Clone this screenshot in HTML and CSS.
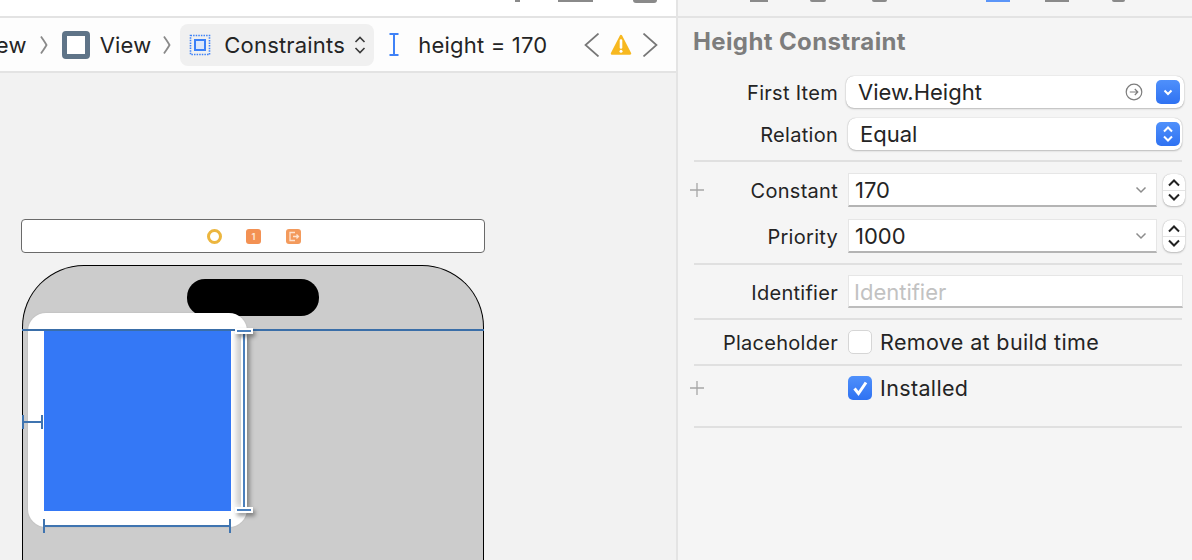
FILE: index.html
```html
<!DOCTYPE html>
<html lang="en">
<head>
<meta charset="utf-8">
<title>Height Constraint</title>
<link rel="stylesheet" href="styles.css">
</head>
<body>
<div class="app">
  <main class="editor">
    <div class="tabstrip">
      <span class="stub stub-a"></span>
      <span class="stub stub-b"></span>
      <span class="stub stub-c"></span>
    </div>
    <nav class="jumpbar">
      <span class="crumb crumb-clip">View</span>
      <svg class="sep" width="10" height="20" viewBox="0 0 10 20"><path d="M2 1.500 C5 6 6.500 8 7.500 10 C6.500 12 5 14 2 18.500" fill="none" stroke="#8a8a8a" stroke-width="1.800"/></svg>
      <span class="view-icon"></span>
      <span class="crumb">View</span>
      <svg class="sep sep-2" width="10" height="20" viewBox="0 0 10 20"><path d="M2 1.500 C5 6 6.500 8 7.500 10 C6.500 12 5 14 2 18.500" fill="none" stroke="#8a8a8a" stroke-width="1.800"/></svg>
      <div class="crumb-pill">
        <svg width="22" height="22" viewBox="0 0 22 22"><rect x="1.500" y="1.500" width="19" height="19" fill="none" stroke="#3f82f7" stroke-width="1.600" stroke-dasharray="1.500 1.100"/><rect x="6" y="6" width="10" height="10" fill="#dbe7fb" stroke="#3a80f7" stroke-width="2"/></svg>
        <span class="crumb">Constraints</span>
        <svg width="14" height="22" viewBox="0 0 14 22"><path d="M2.500 8 L7 3.500 L11.500 8 M2.500 14 L7 18.500 L11.500 14" fill="none" stroke="#3a3a3a" stroke-width="1.600"/></svg>
      </div>
      <svg class="i-beam" width="12" height="24" viewBox="0 0 12 24"><path d="M1.500 1 H10.500 M1.500 22 H10.500 M6 1 V22" fill="none" stroke="#3f82f7" stroke-width="2"/></svg>
      <span class="crumb crumb-last">height = 170</span>
      <svg class="nav-back" width="16" height="24" viewBox="0 0 16 24"><path d="M14.500 0.500 L1.500 12 L14.500 23.500" fill="none" stroke="#777" stroke-width="1.700"/></svg>
      <svg class="warn" width="24" height="22" viewBox="0 0 24 22"><path d="M12 2 L21 19.500 H3 Z" fill="#f7b820" stroke="#f7b820" stroke-width="2.500" stroke-linejoin="round"/><path d="M12 6.500 V13.500" stroke="#fff" stroke-width="2.600" stroke-linecap="round"/><circle cx="12" cy="17.300" r="1.500" fill="#fff"/></svg>
      <svg class="nav-next" width="16" height="24" viewBox="0 0 16 24"><path d="M1.500 0.500 L14.500 12 L1.500 23.500" fill="none" stroke="#777" stroke-width="1.700"/></svg>
    </nav>
    <div class="canvas">
      <div class="scene-bar">
        <span class="dock-vc"></span>
        <span class="dock-fr">1</span>
        <svg class="dock-ex" width="15" height="15" viewBox="0 0 15 15"><rect width="15" height="15" rx="3" fill="#f39a5c"/><path d="M9 3.500 H4 V11.500 H9 M7 7.500 H12.500 M10.500 5.500 L12.500 7.500 L10.500 9.500" fill="none" stroke="#fde3d0" stroke-width="1.300"/></svg>
      </div>
      <div class="device">
        <div class="notch"></div>
        <div class="host-view">
          <div class="blue-view"></div>
          <div class="height-handle">
            <span class="handle-cap handle-top"></span>
            <span class="handle-line"></span>
            <span class="handle-cap handle-bottom"></span>
          </div>
        </div>
      </div>
      <div class="guide-top"></div>
      <div class="guide-left"></div>
      <div class="guide-bottom"></div>
    </div>
  </main>
  <aside class="inspector">
    <div class="tabstrip tabstrip-i">
      <span class="stub stub-d"></span>
      <span class="stub stub-e"></span>
      <span class="stub stub-f"></span>
      <span class="stub stub-active"></span>
      <span class="stub stub-g"></span>
      <span class="stub stub-h"></span>
    </div>
    <h2 class="title">Height Constraint</h2>
    <div class="form">
      <div class="row row-first">
        <label class="lbl">First Item</label>
        <div class="pop pop-first">
          <span class="val">View.Height</span>
          <svg class="goto" width="18" height="18" viewBox="0 0 18 18"><circle cx="9" cy="9" r="7.800" fill="none" stroke="#7d7d7d" stroke-width="1.200"/><path d="M4.800 9 H12.800 M9.800 6 L12.800 9 L9.800 12" fill="none" stroke="#7d7d7d" stroke-width="1.200"/></svg>
          <span class="blue-btn"><svg width="12" height="12" viewBox="0 0 12 12"><path d="M2.500 4.500 L6 8 L9.500 4.500" fill="none" stroke="#fff" stroke-width="2"/></svg></span>
        </div>
      </div>
      <div class="row row-rel">
        <label class="lbl">Relation</label>
        <div class="pop pop-rel">
          <span class="val">Equal</span>
          <span class="blue-btn"><svg width="14" height="20" viewBox="0 0 14 20"><path d="M3 7.500 L7 3.500 L11 7.500 M3 12.500 L7 16.500 L11 12.500" fill="none" stroke="#fff" stroke-width="2"/></svg></span>
        </div>
      </div>
      <hr class="rule rule-1">
      <div class="row row-const">
        <svg class="plus" width="14" height="14" viewBox="0 0 14 14"><path d="M7 0 V14 M0 7 H14" stroke="#a6a6a6" stroke-width="1.300"/></svg>
        <label class="lbl">Constant</label>
        <div class="combo">
          <span class="val val-combo">170</span>
          <svg width="12" height="8" viewBox="0 0 12 8"><path d="M1.500 1.500 L6 6 L10.500 1.500" fill="none" stroke="#8c8c8c" stroke-width="1.500"/></svg>
        </div>
        <div class="stepper">
          <svg width="12" height="8" viewBox="0 0 12 8"><path d="M1 6.500 L6 1.500 L11 6.500" fill="none" stroke="#222" stroke-width="2"/></svg>
          <span class="stepper-mid"></span>
          <svg width="12" height="8" viewBox="0 0 12 8"><path d="M1 1.500 L6 6.500 L11 1.500" fill="none" stroke="#222" stroke-width="2"/></svg>
        </div>
      </div>
      <div class="row row-prio">
        <label class="lbl">Priority</label>
        <div class="combo">
          <span class="val val-combo">1000</span>
          <svg width="12" height="8" viewBox="0 0 12 8"><path d="M1.500 1.500 L6 6 L10.500 1.500" fill="none" stroke="#8c8c8c" stroke-width="1.500"/></svg>
        </div>
        <div class="stepper">
          <svg width="12" height="8" viewBox="0 0 12 8"><path d="M1 6.500 L6 1.500 L11 6.500" fill="none" stroke="#222" stroke-width="2"/></svg>
          <span class="stepper-mid"></span>
          <svg width="12" height="8" viewBox="0 0 12 8"><path d="M1 1.500 L6 6.500 L11 1.500" fill="none" stroke="#222" stroke-width="2"/></svg>
        </div>
      </div>
      <hr class="rule rule-2">
      <div class="row row-id">
        <label class="lbl">Identifier</label>
        <div class="textfield">Identifier</div>
      </div>
      <hr class="rule rule-3">
      <div class="row row-ph">
        <label class="lbl">Placeholder</label>
        <span class="check"></span>
        <span class="check-label">Remove at build time</span>
      </div>
      <hr class="rule rule-4">
      <div class="row row-inst">
        <svg class="plus" width="14" height="14" viewBox="0 0 14 14"><path d="M7 0 V14 M0 7 H14" stroke="#a6a6a6" stroke-width="1.300"/></svg>
        <label class="lbl"></label>
        <span class="check check-on"><svg width="24" height="24" viewBox="0 0 24 24"><path d="M6.500 12.500 L10.500 17.500 L18 6.500" fill="none" stroke="#fff" stroke-width="3"/></svg></span>
        <span class="check-label">Installed</span>
      </div>
      <hr class="rule rule-5">
    </div>
  </aside>
</div>
</body>
</html>
```
FILE: styles.css
```css
* { box-sizing: border-box; }
html, body { margin: 0; height: 100%; overflow: hidden; }
body { font-family: Inter, "Liberation Sans", sans-serif; color: #242424; background: #f2f2f2; }

.app { display: flex; width: 1192px; height: 560px; }

/* Editor */
.editor { width: 678px; height: 560px; display: flex; flex-direction: column; border-right: 2px solid #e4e4e4; overflow: hidden; }
.tabstrip { height: 18px; flex: none; background: #fff; border-bottom: 2px solid #e3e3e3; display: flex; position: relative; }
.stub { position: absolute; top: 0; height: 2px; background: #8a8a8a; }
.stub-a { left: 515px; width: 5px; }
.stub-b { left: 558px; width: 35px; }
.stub-c { left: 633px; width: 24px; height: 3px; border-radius: 0 0 6px 6px; }

.jumpbar { height: 55px; flex: none; display: flex; align-items: center; background: #fdfdfd; border-bottom: 2px solid #e3e3e3; overflow: hidden; }
.crumb { font-size: 22px; line-height: 28px; letter-spacing: .18px; white-space: nowrap; }
.crumb-clip { margin-left: -25px; }
.sep { margin-left: 12px; flex: none; }
.view-icon { width: 28px; height: 28px; margin-left: 13px; border: 5px solid #5f7488; border-radius: 4px; background: #fff; flex: none; }
.view-icon + .crumb { margin-left: 10px; }
.sep-2 { margin-left: 11px; }
.crumb-pill { display: flex; align-items: center; width: 194px; height: 42px; margin-left: 8px; padding-left: 9px; background: #f0f0f0; border-radius: 8px; flex: none; }
.crumb-pill .crumb { margin-left: 13px; }
.crumb-pill svg:last-child { margin-left: 8px; }
.i-beam { margin-left: 14px; flex: none; }
.crumb-last { margin-left: 18px; }
.nav-back { margin-left: 37px; flex: none; }
.warn { margin-left: 9px; flex: none; }
.nav-next { margin-left: 9px; flex: none; }

/* Canvas */
.canvas { position: relative; flex: 1; background: #f2f2f2; overflow: hidden; }
.scene-bar { position: absolute; left: 21px; top: 146px; width: 464px; height: 34px; background: #fff; border: 1px solid #6a6a6a; border-radius: 4px; }
.dock-vc { position: absolute; left: 185px; top: 9px; width: 15px; height: 15px; border: 3.500px solid #ecb63f; border-radius: 50%; background: #fff; }
.dock-fr { position: absolute; left: 224px; top: 9px; width: 15px; height: 15px; background: #f39153; border-radius: 3px; color: #fde3d0; font-size: 9px; font-weight: 700; line-height: 15px; text-align: center; }
.dock-ex { position: absolute; left: 264px; top: 9px; }
.device { position: absolute; left: 22px; top: 192px; width: 462px; height: 340px; background: #cccccc; border: 1.500px solid #000; border-bottom: 0; border-radius: 62px 62px 0 0; }
.notch { position: absolute; left: 164px; top: 13px; width: 132px; height: 37px; background: #000; border-radius: 18px; }
.host-view { position: absolute; left: 5px; top: 47px; width: 219px; height: 214px; background: #fff; border-radius: 18px; box-shadow: 0 0 2px rgba(0,0,0,.12); }
.blue-view { position: absolute; left: 16px; top: 16px; width: 187px; height: 182px; background: #3478f6; }
.height-handle { position: absolute; left: 207px; top: 15px; width: 18px; height: 185px; display: flex; flex-direction: column; align-items: center; }
.handle-cap { width: 18px; height: 6px; flex: none; background: #fff; box-shadow: 2px 3px 4px rgba(0,0,0,.4); position: relative; z-index: 1; }
.handle-cap::after { content: ""; display: block; height: 2px; margin: 2px 2px 0; background: #4a7fbd; }
.handle-line { flex: 1; width: 6px; border-left: 2px solid #fff; border-right: 2px solid #fff; background: #4a7fbd; box-shadow: -4px 0 6px rgba(0,0,0,.26), 3px 2px 4px rgba(0,0,0,.32); }
.guide-top { position: absolute; left: 22px; top: 256px; width: 462px; height: 2px; background: #3a6ea8; }
.guide-left { position: absolute; left: 22px; top: 342px; width: 21px; height: 14px; border-left: 2px solid #3f74b0; border-right: 2px solid #3f74b0; background: linear-gradient(#3f74b0,#3f74b0) center / 100% 2px no-repeat; }
.guide-bottom { position: absolute; left: 43px; top: 446px; width: 188px; height: 14px; border-left: 2px solid #3f74b0; border-right: 2px solid #3f74b0; background: linear-gradient(#3f74b0,#3f74b0) center / 100% 2px no-repeat; }

/* Inspector */
.inspector { flex: 1; height: 560px; background: #f5f5f5; display: flex; flex-direction: column; }
.tabstrip-i { background: #f5f5f5; }
.stub-d { left: 72px; width: 18px; }
.stub-e { left: 132px; width: 16px; border-radius: 0 0 6px 6px; }
.stub-f { left: 194px; width: 15px; border-radius: 0 0 6px 6px; }
.stub-active { left: 308px; width: 24px; background: #5b95f8; }
.stub-g { left: 367px; width: 24px; }
.stub-h { left: 434px; width: 13px; border-radius: 0 0 6px 6px; }
.title { margin: 9px 0 0 15px; font-size: 24px; line-height: 30px; font-weight: 700; color: #7d7d7d; letter-spacing: .38px; }
.form { display: flex; flex-direction: column; margin-top: 19px; }
.row { display: flex; align-items: center; position: relative; padding-left: 0; }
.lbl { width: 160px; flex: none; text-align: right; font-size: 20px; line-height: 26px; letter-spacing: .28px; }
.plus { position: absolute; left: 12px; top: 50%; margin-top: -7px; }
.val { font-size: 22px; line-height: 28px; white-space: nowrap; }
.row-first { height: 32px; }
.row-first .lbl, .row-rel .lbl, .row-const .lbl, .row-prio .lbl, .row-id .lbl, .row-ph .lbl { margin-top: 2px; }
.pop { display: flex; align-items: center; height: 32px; background: #fff; border-radius: 8px; box-shadow: 0 0 1px rgba(0,0,0,.3), 0 1px 2px rgba(0,0,0,.22); }
.pop-first { width: 338px; margin-left: 8px; padding: 0 4px 0 12px; }
.pop-first .val { flex: 1; }
.goto { margin-right: 13px; }
.row-rel { height: 32px; margin-top: 10px; }
.pop-rel { width: 334px; margin-left: 10px; padding: 0 2px 0 12px; }
.pop-rel .val { flex: 1; }
.blue-btn { display: flex; align-items: center; justify-content: center; width: 24px; height: 24px; border-radius: 5px; background: linear-gradient(#4f90fb, #2f72f2); }
.rule { width: 488px; height: 2px; margin: 0 0 0 16px; border: 0; background: #e0e0e0; flex: none; }
.rule-1 { margin-top: 10px; }
.rule-2 { margin-top: 10px; }
.rule-3 { margin-top: 10px; }
.rule-4 { margin-top: 10px; }
.rule-5 { margin-top: 26px; }
.row-const { height: 34px; margin-top: 11px; }
.row-prio { height: 34px; margin-top: 12px; }
.combo { display: flex; align-items: center; width: 309px; height: 34px; margin-left: 10px; padding: 0 9px 0 6px; background: #fff; border: 1px solid #e6e6e6; border-bottom: 2px solid #b4b4b4; }
.val-combo { flex: 1; }
.stepper { display: flex; flex-direction: column; align-items: center; justify-content: space-between; width: 22px; height: 32px; margin-left: 6px; padding: 5px 0; background: #fff; border-radius: 8px; box-shadow: 0 0 1px rgba(0,0,0,.3), 0 1px 2px rgba(0,0,0,.22); }
.stepper-mid { width: 100%; height: 1px; background: #e4e4e4; }
.row-id { height: 33px; margin-top: 10px; }
.textfield { width: 335px; height: 33px; margin-left: 10px; padding-left: 5px; background: #fff; border: 1px solid #e6e6e6; border-bottom: 2px solid #bdbdbd; font-size: 22px; line-height: 32px; color: #c2c2c2; }
.row-ph { height: 24px; margin-top: 10px; }
.row-inst { height: 24px; margin-top: 10px; }
.check { width: 24px; height: 24px; margin-left: 10px; flex: none; background: #fff; border: 1px solid #d6d6d6; border-radius: 5px; }
.check-on { border: 0; background: linear-gradient(#4f90fb, #2f72f2); }
.check-on svg { display: block; }
.check-label { margin-left: 8px; font-size: 21.500px; line-height: 26px; letter-spacing: .36px; white-space: nowrap; }
```
